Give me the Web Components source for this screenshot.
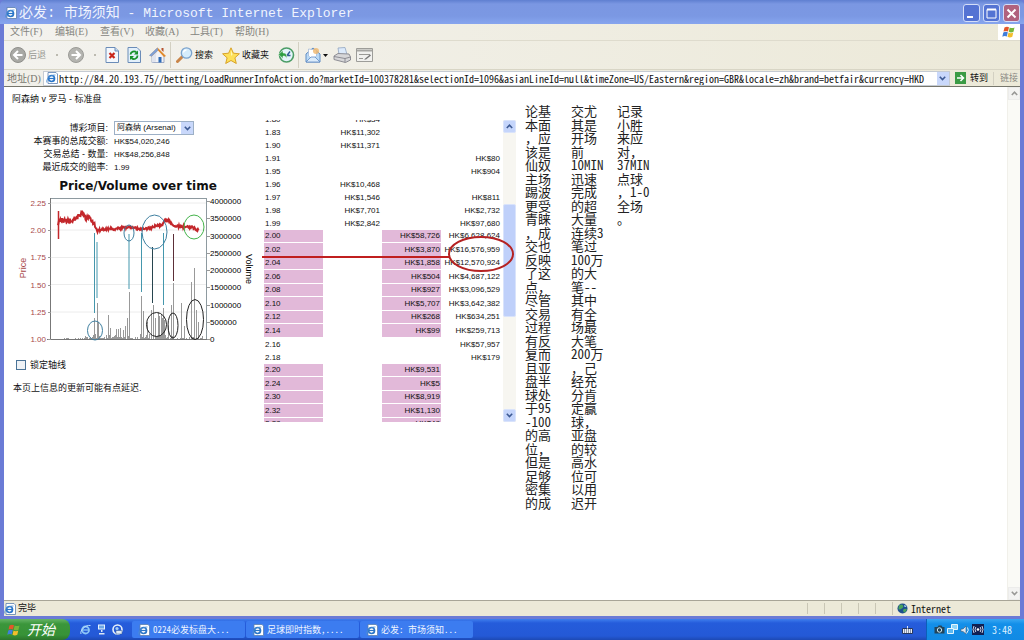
<!DOCTYPE html>
<html lang="zh-CN">
<head>
<meta charset="utf-8">
<title>必发: 市场须知</title>
<style>
  html, body { margin: 0; }
  body {
    --ui: "Liberation Sans", "Noto Sans CJK SC", sans-serif;
    --fixed: "Noto Sans Mono CJK SC", "Liberation Mono", "Noto Sans CJK SC", monospace;
    --menu: "Liberation Serif", "Noto Sans CJK SC", serif;
    --face: #ece9d8;
    font: 9px/13px var(--ui);
    color: #111;
  }
</style>
</head>
<body>
<xp-desktop></xp-desktop>

<script>
const ICONS = {
  ie: [12, 12, '<path d="M2 .5h8l1.5 1.5v9.500H2z" fill="#fff" stroke="#5a7fae" stroke-width=".8"/><circle cx="5.500" cy="6.500" r="3" fill="none" stroke="#2a76c8" stroke-width="1.700"/><path d="M3 6.500h5.500" stroke="#2a76c8" stroke-width="1.200"/><path d="M.8 10.500C-.5 8 4 2.500 9.500 3" fill="none" stroke="#4a90d8" stroke-width=".8"/>'],
  back: [16, 16, '<circle cx="8" cy="8" r="7.500" fill="#a9a9a5" stroke="#8f8f8b"/><path d="M12.500 8H4.500M8 4 4 8l4 4" fill="none" stroke="#fff" stroke-width="2"/>'],
  forward: [16, 16, '<circle cx="8" cy="8" r="7.500" fill="#b4b4b0" stroke="#9b9b97"/><path d="M3.500 8h8M8 4l4 4-4 4" fill="none" stroke="#fff" stroke-width="2"/>'],
  stop: [14, 16, '<path d="M1 .5h9L13.500 4v11.500H1z" fill="#f4f8fd" stroke="#6b8cb8"/><path d="M10 .5V4h3.500" fill="#c5d8ee" stroke="#6b8cb8"/><path d="m4.500 6 5 5m0-5-5 5" stroke="#c9261a" stroke-width="2.200"/>'],
  refresh: [14, 16, '<path d="M1 .5h9L13.500 4v11.500H1z" fill="#e3f0fb" stroke="#6b8cb8"/><path d="M3.500 7.500a3.500 3.500 0 0 1 6-2M10.500 8.500a3.500 3.500 0 0 1-6 2.500" fill="none" stroke="#17912b" stroke-width="1.800"/><path d="M11 3.500v4H7zM3 13V9h4z" fill="#17912b"/>'],
  home: [17, 16, '<path d="m3 8 6-6 6 6v7.500H3z" fill="#f2f2f6" stroke="#7f8fb5" stroke-width=".7"/><path d="M9 2 3 8v7.500l4-1V8z" fill="#dfe3ee"/><path d="M8.500.5 17 9l-2 1-6-6.500-6.500 6-2-1z" fill="#e08a2c"/><path d="M8.500.5 0 8.500l2.500 1L9 3.500z" fill="#7d9fd6"/><path d="M9.500 10h3v5.500h-3z" fill="#2f6cb8"/><path d="M12.500 1h2v4l-2-2z" fill="#b6522e"/>'],
  search: [17, 16, '<path d="m6.500 9.500-5 5" stroke="#c98549" stroke-width="3" stroke-linecap="round"/><circle cx="10.500" cy="6" r="5.200" fill="#d5ecfb" stroke="#7ba3cd" stroke-width="1.300"/><path d="M7.500 5.500a3 3 0 0 1 3-2.500" stroke="#fff" stroke-width="1.300" fill="none"/>'],
  star: [18, 17, '<path d="m9 .8 2.400 5.400 6 .6-4.500 4 1.400 5.700L9 13.500l-5.300 3 1.400-5.700-4.500-4 6-.6z" fill="#fde05a" stroke="#d59b1c" stroke-width=".9"/><path d="m9 3 1.500 4.500L9 9z" fill="#fff6b8"/>'],
  history: [17, 16, '<circle cx="8.500" cy="8" r="7" fill="#e4f4fb" stroke="#4c9d66" stroke-width="1.600"/><path d="M9 8.500 12 4.500M9 8.500h3.500" stroke="#2f5a95" stroke-width="1.400"/><path d="M.5 7.500 5 3.500V6c3 0 4.500 2 3.500 5.500C8 9.500 7 9 5 9v2.500z" fill="#2f9e44" stroke="#e9f7ec" stroke-width=".5"/>'],
  mail: [16, 16, '<path d="m1 7 7-6 7 6v8H1z" fill="#b9d9f5" stroke="#5f8cc4"/><path d="m3.500 2 8 1v6l-4 3-4-3z" fill="#fff" stroke="#9db4d4" stroke-width=".7"/><path d="m1 15 5-5h4l5 5z" fill="#dcecfb" stroke="#5f8cc4" stroke-width=".8"/><circle cx="11" cy="4" r="3" fill="#f0b66b" opacity=".8"/>'],
  caret: [5, 3, '<path d="M0 0h5L2.500 3z" fill="#111"/>'],
  printer: [18, 16, '<path d="m5 1 7-.5 2 7H6z" fill="#dceafb" stroke="#91a4c0" stroke-width=".8"/><path d="m1 9 4-2.500 11 .5 1.500 3v3l-5 2.500L1 12.500z" fill="#d6d6d8" stroke="#84848c" stroke-width=".9"/><path d="m1 9.500 11 2 5.500-1.500M12 11.500v4" fill="none" stroke="#84848c" stroke-width=".9"/>'],
  edit: [17, 14, '<path d="M.5.5h16v13H.5z" fill="#f1f1ee" stroke="#9d9d99"/><path d="M1 2.500h15" stroke="#a6a6a2" stroke-width="2"/><path d="M3 6.500h11M3 10.500h4" stroke="#9a9a96"/><path d="m8 11.500 6-5 1 1-5 4z" fill="#777"/>'],
  chevron: [7, 5, '<path d="m.8.8 2.700 2.800L6.200.8" fill="none" stroke="#3d5a93" stroke-width="1.600"/>'],
  chevronUp: [7, 5, '<path d="m.8 4 2.700-2.800L6.200 4" fill="none" stroke="#3d5a93" stroke-width="1.600"/>'],
  go: [11, 12, '<path d="M0 0h11v12H0z" fill="#3b9b45"/><path d="M2 6h6M5.500 3l3 3-3 3" fill="none" stroke="#fff" stroke-width="1.500"/>'],
  flag: [14, 12, '<path d="M2.500 1.500Q5 0 7 1.300L6 5.500Q4 4.400 1.500 5.600z" fill="#e4572a"/><path d="M7.700 1.500q2.300 1.200 4.800 0l-1 4.300q-2.500 1.200-4.800 0z" fill="#75b83a"/><path d="M1.300 6.400Q3.800 5.200 5.800 6.300l-1 4.200q-2-1.100-4.500.2z" fill="#3f7edb"/><path d="M6.500 6.600q2.300 1.200 4.800 0l-1 4.200q-2.500 1.200-4.800 0z" fill="#f2be2c"/>'],
  globe: [11, 11, '<circle cx="5.500" cy="5.500" r="5" fill="#1d4f8f"/><path d="M2 2.500q3-2 4 0T4 6 1.500 5zM6 7q2-2 4-.5L8 9.500 6.500 9z" fill="#4aa25a"/><path d="M7 2q2 0 2.500 2L7.500 4z" fill="#9fd0ea"/>'],
  quickIe: [11, 11, '<circle cx="5.500" cy="6" r="3.500" fill="none" stroke="#8cc6f8" stroke-width="1.800"/><path d="M2.500 6h6.500" stroke="#8cc6f8" stroke-width="1.300"/><path d="M1 10C-.5 7 5 .5 10.500 1.500" fill="none" stroke="#b9dcfa"/>'],
  quickDesk: [9, 11, '<path d="M1 .5h7v5H1z" fill="#e9f3fd"/><path d="M2 1.500h5v3H2z" fill="#6da7e6"/><path d="M4 6h1.500v2H4zM2 9h5.500v1.500H2z" fill="#d9e6f5"/>'],
  quickMail: [11, 11, '<circle cx="5.500" cy="5.500" r="4.500" fill="none" stroke="#e9f2fb" stroke-width="1.600"/><path d="M4 6.500h6v3.500H4z" fill="#dfeaf6" stroke="#35588f" stroke-width=".5"/><circle cx="5" cy="4.500" r="1.600" fill="#a4cdf4"/>'],
  keyboard: [11, 8, '<path d="M.5 2.500h10v5H.5z" fill="#e9edf5" stroke="#26365f"/><path d="M2 4h7M2 6h7" stroke="#26365f" stroke-dasharray="1 1"/><path d="M5.500 2.500V0" stroke="#dfe6f5"/>'],
  camera: [11, 9, '<path d="M.5 2h3L4.500.5h3l1 1.500h2v6.500H.5z" fill="#23455b"/><circle cx="5.500" cy="5" r="2.200" fill="none" stroke="#cfe8ee"/>'],
  network: [11, 11, '<path d="M4.500.5h6v5h-6z" fill="#8fd4f7" stroke="#e5f5fd"/><path d="M.5 4.500h6v5h-6z" fill="#5cb8f0" stroke="#e5f5fd"/>'],
  speaker: [10, 10, '<path d="M1 4h2l3-3v8L3 6.500H1z" fill="#dbe6ef" stroke="#3a5a78" stroke-width=".6"/><path d="M7.500 2.500q2 2.500-1 6" fill="none" stroke="#e9f5fd"/>'],
  signal: [12, 11, '<path d="M0 0h12v11H0z" fill="#101f52"/><circle cx="6" cy="5.500" r="1.300" fill="#fff"/><path d="M3.800 3q-1.500 2.500 0 5M8.200 3q1.500 2.500 0 5M2 2Q0 5.500 2 9M10 2q2 3.500 0 7" fill="none" stroke="#e5e9f5" stroke-width=".9"/>'],
};

function define(name, css, html, ready) {
  const template = document.createElement("template");
  template.innerHTML = `<style>*{box-sizing:border-box}${css}</style>${html}`;
  customElements.define(name, class extends HTMLElement {
    constructor() {
      super();
      this.attachShadow({ mode: "open" }).append(template.content.cloneNode(true));
    }
    connectedCallback() { if (ready) ready.call(this, this.shadowRoot); }
  });
}

define("xp-icon", "", "", function (root) {
  const [w, h, body] = ICONS[this.getAttribute("name")];
  root.innerHTML = `<style>:host{display:inline-flex;flex:none}svg{display:block}</style>
    <svg width="${w}" height="${h}" viewBox="0 0 ${w} ${h}" aria-hidden="true">${body}</svg>`;
});

define("xp-titlebar", `
  :host{display:flex;align-items:center;height:24px;padding:2px 4px 0 5px;border-radius:5px 5px 0 0;
    background:linear-gradient(#5f7fd0,#7b97e2 4px,#7b98e3 16px,#87a5ee)}
  h1{flex:1;margin:0 0 0 2px;font:13px/20px "Liberation Mono","Noto Sans CJK SC",monospace;color:#f0f4fe;white-space:pre}
  div{display:flex;gap:3px}
  button{display:grid;place-items:center;width:17px;height:18px;padding:0;border:1px solid #d4def8;border-radius:3px;background:#5473d3}
  .close{background:#b0627e}
  ::slotted(span){font-size:14px}
`, `<xp-icon name="ie"></xp-icon><h1><slot></slot></h1>
  <div>
    <button aria-label="最小化"><svg width="11" height="11"><path d="M1 9h6" stroke="#fff" stroke-width="2"/></svg></button>
    <button aria-label="最大化"><svg width="11" height="11"><path d="M1 1.500h9v8.500H1z" fill="none" stroke="#fff"/><path d="M1 1.500h9" stroke="#fff" stroke-width="2"/></svg></button>
    <button class="close" aria-label="关闭"><svg width="11" height="11"><path d="m1.500 1.500 8 8m0-8-8 8" stroke="#fff" stroke-width="2"/></svg></button>
  </div>`);

define("xp-menubar", `
  :host{display:flex;align-items:stretch;height:17px;border-bottom:1px solid #dedbcd;background:linear-gradient(90deg,#f3f2ee,#ece9d8)}
  nav{display:flex;flex:1;gap:12px;padding-left:6px;align-items:center}
  button{width:33px;padding:0;border:0;background:none;font:10px/14px var(--menu);color:#85857f;white-space:nowrap;text-align:left}
  .brand{display:grid;place-items:center;width:22px;background:#fff}
`, `<nav><button>文件(F)</button><button>编辑(E)</button><button>查看(V)</button><button>收藏(A)</button><button>工具(T)</button><button>帮助(H)</button></nav>
  <span class="brand"><xp-icon name="flag"></xp-icon></span>`);

define("xp-toolbar", `
  :host{display:flex;align-items:center;height:29px;padding-left:6px;border-bottom:1px solid #d8d5c5;background:linear-gradient(90deg,#f3f2ee,#ece9d8)}
  div{display:flex;align-items:center;height:26px}
  .nav{gap:10px;margin-right:9px}
  .page{gap:8px;padding-right:4px;border-right:1px solid #d3d0c2}
  .find{gap:9px;padding:0 3px 0 5px;border-right:1px solid #d3d0c2}
  .tools{gap:5px;padding-left:6px}
  button{display:flex;align-items:center;gap:2px;padding:0;border:0;background:none;font:9px/13px var(--ui);color:#111;white-space:nowrap}
  button:disabled{color:#9a9a94}
  i{width:2px;height:2px;background:#bcbab0}
`, `<div class="nav"><button disabled><xp-icon name="back"></xp-icon>后退</button><i></i>
    <button disabled aria-label="前进"><xp-icon name="forward"></xp-icon></button><i></i></div>
  <div class="page"><button aria-label="停止"><xp-icon name="stop"></xp-icon></button>
    <button aria-label="刷新"><xp-icon name="refresh"></xp-icon></button>
    <button aria-label="主页"><xp-icon name="home"></xp-icon></button></div>
  <div class="find"><button><xp-icon name="search"></xp-icon>搜索</button>
    <button><xp-icon name="star"></xp-icon>收藏夹</button>
    <button aria-label="历史"><xp-icon name="history"></xp-icon></button></div>
  <div class="tools"><button aria-label="邮件"><xp-icon name="mail"></xp-icon><xp-icon name="caret"></xp-icon></button>
    <button aria-label="打印"><xp-icon name="printer"></xp-icon></button>
    <button aria-label="编辑"><xp-icon name="edit"></xp-icon></button></div>`);

define("xp-addressbar", `
  :host{display:flex;align-items:center;height:17px;padding:0 2px 0 3px;border-bottom:1px solid #76766c;background:linear-gradient(90deg,#f1f0ea,#ece9d8)}
  label{width:36px;font:10px/15px var(--menu);color:#777770}
  .combo{display:flex;flex:1;align-items:center;height:15px;margin-right:5px;padding-left:2px;border:1px solid #c5cbd3;background:#fff}
  input{flex:1;min-width:0;height:13px;padding:0 0 0 1px;border:0;outline:0;background:none;font:10px/13px var(--fixed);color:#111}
  .drop{display:grid;place-items:center;width:12px;height:13px;padding:0;border:0;background:#c9d8fb}
  .go{display:flex;align-items:center;gap:4px;padding:0 5px 0 0;border:0;border-right:1px solid #d3d0c2;background:none;font:9px/13px var(--ui);color:#111}
  a{padding-left:6px;color:#8a8a84;text-decoration:none}
`, `<label for="url">地址(D)</label>
  <span class="combo"><xp-icon name="ie"></xp-icon>
    <input id="url" value="http://84.20.193.75//betting/LoadRunnerInfoAction.do?marketId=100378281&amp;selectionId=1096&amp;asianLineId=null&amp;timeZone=US/Eastern&amp;region=GBR&amp;locale=zh&amp;brand=betfair&amp;currency=HKD">
    <button class="drop" aria-label="地址列表"><xp-icon name="chevron"></xp-icon></button></span>
  <button class="go"><xp-icon name="go"></xp-icon>转到</button><a href="#">链接</a>`);

define("price-chart", `
  :host{display:block}
  h2{margin:0;font:bold 12px/16px "DejaVu Sans",sans-serif;text-align:center;white-space:nowrap}
  svg{display:block;font:8px "Liberation Sans",sans-serif}
  .price{fill:#a8484a}.line{fill:none;stroke:#c3272b;stroke-width:2}
  .ring{fill:none}
`, `<h2>Price/Volume over time</h2>
  <svg width="244" height="152" viewBox="12 194 244 152" role="img" aria-label="Price/Volume over time">
    <path d="M51 203h156M51 230h156M51 257.500h156M51 284.500h156M51 312h156" stroke="#ececec"/>
    <path d="M51 198.500h156M206.500 198v141" fill="none" stroke="#8e9aa0"/>
    <path d="M50.500 198v141.500M47 339.500h160" fill="none" stroke="#777"/>
    <g id="axes"></g>
    <text class="price" style="font-size:9px" text-anchor="middle" transform="translate(26 268) rotate(-90)">Price</text>
    <text style="font-size:9px" text-anchor="middle" transform="translate(246 269) rotate(90)">Volume</text>
    <path id="bars" stroke="#999" stroke-width="1" fill="none"/>
    <path d="M94.500 233v80M97 242v56M129 234v55M141.500 233v59M163.500 233v72" stroke="#4597ad"/>
    <path d="M152.500 247v56" stroke="#27454f"/><path d="M173.500 234v47" stroke="#5c2f38"/>
    <path class="line" d="M58.500 211v28" style="stroke-width:1.500"/>
    <path id="line" class="line"/>
    <g class="ring" stroke="#3f7fa0"><ellipse cx="95" cy="330.500" rx="7.500" ry="9.500"/><ellipse cx="129" cy="233" rx="5" ry="8"/><ellipse cx="154.500" cy="232" rx="12.500" ry="17"/></g>
    <ellipse class="ring" cx="194" cy="227" rx="10" ry="12" stroke="#43b34a"/>
    <g class="ring" stroke="#222"><ellipse cx="156.500" cy="324.500" rx="10" ry="12"/><ellipse cx="173" cy="325.500" rx="5" ry="12.500"/><ellipse cx="195" cy="319.500" rx="8.500" ry="20"/></g>
  </svg>`, function (root) {
  let axes = "";
  ["2.25", "2.00", "1.75", "1.50", "1.25", "1.00"].forEach((t, i) => {
    const y = Math.round(203 + i * 27.2);
    axes += `<text class="price" x="46" y="${y + 3}" text-anchor="end">${t}</text><path d="M48 ${y}.5h3" stroke="#999"/>`;
  });
  for (let i = 0; i <= 8; i++) {
    const y = Math.round(201 + i * 17.250);
    axes += `<text x="210" y="${y + 3}">${4000000 - i * 500000}</text><path d="M207 ${y}.5h3" stroke="#999"/>`;
  }
  root.getElementById("axes").innerHTML = axes;

  let seed = 17;
  const noise = () => (seed = (seed * 1103515245 + 12345) % 2147483648) / 2147483648;

  const trend = [[58,224],[60,220],[70,221],[75,218],[79,216],[82,213],[85,218],[91,219],[94,223],[97,231],[103,229],[115,229],[127,227],[140,229],[150,228],[157,225],[162,225],[165,220],[169,221],[173,226],[185,227],[192,227],[199,231]];
  let d = "";
  for (let i = 0; i < trend.length - 1; i++) {
    const [x0, y0] = trend[i], [x1, y1] = trend[i + 1];
    for (let x = x0; x < x1; x += 0.5) {
      const spread = x < 94 ? 5 : 2.5;
      const y = y0 + (y1 - y0) * (x - x0) / (x1 - x0) + (noise() - 0.5) * spread;
      d += `${d ? "L" : "M"}${x} ${y.toFixed(1)}`;
    }
  }
  root.getElementById("line").setAttribute("d", d);

  const peaks = {94:318,97:303,98:322,108:315,110:328,116:329,118:329,120:328,123:330,125:326,127:318,129:292,141:296,143:311,147:322,151:310,153:305,155:318,158:312,159:316,161:314,162:318,163:308,164:320,168:325,171:305,173:283,181:303,184:326,191:282,194:268,196:310,198:322};
  let bars = "";
  for (let x = 64; x < 203; x++) {
    const reach = x < 80 ? 2 : x < 90 ? 5 : x < 100 ? 12 : 6;
    const top = peaks[x] || Math.round(339 - noise() * noise() * reach);
    if (top < 339) bars += `M${x}.5 339V${top}`;
  }
  root.getElementById("bars").setAttribute("d", bars);
});

define("market-summary", `
  :host{display:block;width:260px;padding:6px 0 0 8px}
  h1{margin:0 0 16px;font:9px/12px var(--ui)}
  form,dl{margin:0}
  .facts{display:grid;grid-template-columns:96px 1fr;column-gap:6px;grid-auto-rows:13px;align-items:center}
  .facts.pick{grid-auto-rows:14px}
  .facts>:nth-child(odd){text-align:right;white-space:nowrap}
  dd{margin:0;font-size:8px}
  .choice{position:relative;width:80px;height:14px}
  select{display:block;width:80px;height:14px;padding:0 0 0 2px;border:1px solid #9db0c6;border-radius:0;appearance:none;background:#fff;font:8px/12px var(--ui);color:#111}
  .choice span{position:absolute;top:1px;right:1px;display:grid;place-items:center;width:12px;height:12px;background:#c9d8fb;pointer-events:none}
  price-chart{margin-top:4px}
  .lock{display:flex;align-items:center;gap:4px;height:14px;margin:12px 0 10px 4px}
  input{appearance:none;width:10px;height:10px;margin:0;border:1px solid #4a7397;background:#eef2f6}
  p{margin:0;padding-left:1px;line-height:12px}
`, `<h1>阿森纳 v 罗马 - 标准盘</h1>
  <form class="facts pick"><label for="runner">博彩项目:</label>
    <div class="choice"><select id="runner"><option>阿森纳 (Arsenal)</option></select><span><xp-icon name="chevron"></xp-icon></span></div></form>
  <dl class="facts"><dt>本赛事的总成交额:</dt><dd>HK$54,020,246</dd>
    <dt>交易总结 - 数量:</dt><dd>HK$48,256,848</dd>
    <dt>最近成交的赔率:</dt><dd>1.99</dd></dl>
  <price-chart></price-chart>
  <div class="lock"><input type="checkbox" id="lock"><label for="lock">锁定轴线</label></div>
  <p>本页上信息的更新可能有点延迟.</p>`);

const LADDER = [
  ["1.80", "HK$34", "", ""], ["1.83", "HK$11,302", "", ""], ["1.90", "HK$11,371", "", ""],
  ["1.91", "", "", "HK$80"], ["1.95", "", "", "HK$904"], ["1.96", "HK$10,468", "", ""],
  ["1.97", "HK$1,546", "", "HK$811"], ["1.98", "HK$7,701", "", "HK$2,732"], ["1.99", "HK$2,842", "", "HK$97,680"],
  ["2.00", "", "HK$58,726", "HK$6,628,624"], ["2.02", "", "HK$3,870", "HK$16,576,959"], ["2.04", "", "HK$1,858", "HK$12,570,924"],
  ["2.06", "", "HK$504", "HK$4,687,122"], ["2.08", "", "HK$927", "HK$3,096,529"], ["2.10", "", "HK$5,707", "HK$3,642,382"],
  ["2.12", "", "HK$268", "HK$634,251"], ["2.14", "", "HK$99", "HK$259,713"],
  ["2.16", "", "", "HK$57,957"], ["2.18", "", "", "HK$179"],
  ["2.20", "", "HK$9,531", ""], ["2.24", "", "HK$5", ""], ["2.30", "", "HK$8,919", ""],
  ["2.32", "", "HK$1,130", ""], ["2.38", "", "HK$48", ""],
];

define("price-ladder", `
  :host{position:relative;display:flex;width:252px;height:302px;margin-top:33px}
  .view{flex:1;overflow:auto;scrollbar-width:none}
  table{width:237px;table-layout:fixed;border-collapse:separate;border-spacing:0;font-size:8px}
  td{height:13px;padding:0 1px;line-height:13px;text-align:right;white-space:nowrap}
  td:nth-child(1){width:59px;text-align:left}
  td:nth-child(2){width:59px;padding-right:2px}
  td:nth-child(3){width:59px}
  .lay td{line-height:12px;border-bottom:1px solid #fff}
  .lay:nth-child(odd) td{height:14px;line-height:13px}
  .lay td:nth-child(odd){background:#e2b9d9 padding-box}
  .bar{display:flex;flex-direction:column;width:13px;background:#f7f6f1}
  .bar button{display:grid;place-items:center;height:13px;padding:0;border:1px solid #d9e3fb;border-radius:2px;background:#c5d5fb}
  .thumb{flex:none;height:113px;border:1px solid #d9e3fb;border-radius:2px;background:#bfd0fa}
  .before{flex:none;height:71px}.after{flex:1}
  .mark{position:absolute;left:-2px;top:114px;pointer-events:none}
`, `<div class="view"><table><tbody></tbody></table></div>
  <div class="bar"><button aria-label="向上"><xp-icon name="chevronUp"></xp-icon></button><span class="before"></span>
    <span class="thumb"></span><span class="after"></span><button aria-label="向下"><xp-icon name="chevron"></xp-icon></button></div>
  <svg class="mark" width="256" height="44" aria-hidden="true"><path d="M0 23h188" stroke="#c01f1f" stroke-width="2"/><ellipse cx="219" cy="20" rx="32" ry="17" fill="none" stroke="#b52222" stroke-width="2"/></svg>`,
function (root) {
  root.querySelector("tbody").innerHTML = LADDER.map(r =>
    `<tr${r[2] ? ' class="lay"' : ""}>${r.map(c => `<td>${c}</td>`).join("")}</tr>`).join("");
  root.querySelector(".view").scrollTop = 7;
});

const NOTES = [
  "论基 本面 ，应 该是 仙奴 主场 踢波 更受 青睐 ，成 交也 反映 了这 点， 尽管 交易 过程 有反 复而 且亚 盘半 球处 于95 -100 的高 位， 但是 足够 密集 的成",
  "交尤 其是 开场 前 10MIN 迅速 完成 的超 大量 连续3 笔过 100万 的大 笔-- 其中 有全 场最 大笔 200万 ，己 经充 分肯 定赢 球， 亚盘 的较 高水 位可 以用 迟开",
  "记录 小胜 来应 对， 37MIN 点球 ，1-0 全场 。",
];

define("match-notes", `
  :host{display:flex;margin:17px 0 0 9px;font:13px/13px var(--fixed);color:#222}
  ol{display:grid;grid-template-rows:repeat(30,1fr);width:46px;height:405px;margin:0;padding:0;list-style:none;white-space:nowrap}
`, "", function (root) {
  NOTES.forEach(col => {
    const list = document.createElement("ol");
    list.innerHTML = col.split(" ").map(t => `<li>${t}</li>`).join("");
    root.append(list);
  });
});

define("xp-page", `
  :host{display:flex;flex:1;background:#fff}
  main{display:flex;flex:1;align-items:flex-start}
  .bar{display:flex;flex-direction:column;justify-content:space-between;width:13px;background:#fafaf6;border-left:1px solid #f1f0ea}
  button{display:grid;place-items:center;height:13px;padding:0;border:1px solid #e6e4dc;background:#f1f0ea;opacity:.6;filter:grayscale(1)}
`, `<main><slot></slot></main>
  <div class="bar"><button disabled aria-label="向上"><xp-icon name="chevronUp"></xp-icon></button><button disabled aria-label="向下"><xp-icon name="chevron"></xp-icon></button></div>`);

define("xp-statusbar", `
  :host{display:flex;align-items:center;height:16px;border-top:1px solid #a8a597;background:var(--face)}
  .state{display:flex;flex:1;align-items:center;gap:2px}
  i{width:17px;height:11px;border-left:1px solid #c9c6b5}
  .zone{display:flex;align-items:center;gap:3px;width:128px;padding-left:4px;border-left:1px solid #c9c6b5;font:10px/13px var(--fixed)}
`, `<span class="state"><xp-icon name="ie"></xp-icon>完毕</span><i></i><i></i><i></i><i></i><i></i>
  <span class="zone"><xp-icon name="globe"></xp-icon>Internet</span>`);

define("xp-taskbar", `
  :host{display:flex;align-items:stretch;height:21px;background:linear-gradient(#3f7fee,#255cdb 4px,#2459d6 17px,#1d49b4);color:#fff}
  .start{display:flex;align-items:center;gap:6px;width:70px;padding:0 0 0 7px;border:0;border-radius:0 8px 8px 0;background:linear-gradient(#66b466,#3b963b 5px,#379237 16px,#2c742c);font:italic 14px/20px var(--ui);color:#fff;white-space:nowrap}
  .quick{display:flex;align-items:center;gap:6px;width:62px;padding-left:10px}
  .tasks{display:flex;flex:1;gap:1px;padding:2px 0}
  .tasks button{display:flex;align-items:center;gap:3px;width:113px;padding:0 0 0 6px;border:0;border-radius:2px;background:#3c7cf0;font:9px/15px var(--fixed);color:#f0f5ff;white-space:nowrap}
  .lang{display:flex;align-items:center;width:24px}
  .tray{display:flex;align-items:center;gap:2px;width:98px;padding-left:7px;border-left:1px solid #0d5fb8;background:linear-gradient(#3aa8f2,#138fe9 5px,#118ae4);font:10px/16px var(--fixed)}
  time{margin-left:6px;color:#dff0ff}
`, `<button class="start"><xp-icon name="flag"></xp-icon>开始</button>
  <span class="quick"><xp-icon name="quickIe"></xp-icon><xp-icon name="quickDesk"></xp-icon><xp-icon name="quickMail"></xp-icon></span>
  <div class="tasks"><button><xp-icon name="ie"></xp-icon>0224必发标盘大...</button>
    <button><xp-icon name="ie"></xp-icon>足球即时指数,....</button>
    <button><xp-icon name="ie"></xp-icon>必发: 市场须知...</button></div>
  <span class="lang"><xp-icon name="keyboard"></xp-icon></span>
  <span class="tray"><xp-icon name="camera"></xp-icon><xp-icon name="network"></xp-icon><xp-icon name="speaker"></xp-icon><xp-icon name="signal"></xp-icon><time>3:48</time></span>`);

define("xp-desktop", `
  :host{display:flex;flex-direction:column;min-height:100vh;background:#6b7bd6}
  .window{display:flex;flex:1;flex-direction:column}
  .frame{display:flex;flex:1;flex-direction:column;padding:0 4px 3px;background:#6b7bd6}
`, `<div class="window"><xp-titlebar><span>必发: 市场须知</span> - Microsoft Internet Explorer</xp-titlebar>
    <div class="frame"><xp-menubar></xp-menubar><xp-toolbar></xp-toolbar><xp-addressbar></xp-addressbar>
      <xp-page><market-summary></market-summary><price-ladder></price-ladder><match-notes></match-notes></xp-page>
      <xp-statusbar></xp-statusbar></div></div>
  <xp-taskbar></xp-taskbar>`);
</script>
</body>
</html>
